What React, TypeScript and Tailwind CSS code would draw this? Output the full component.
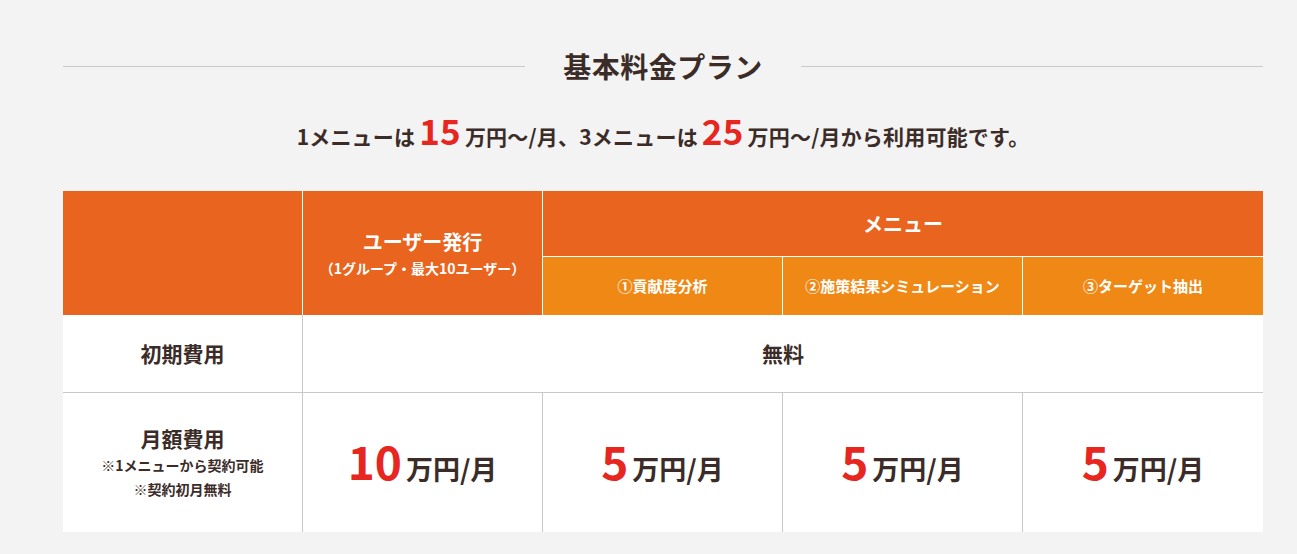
import * as React from "react";

const FONT = { fontFamily: '"Noto Sans CJK JP", "Noto Sans", sans-serif' };

function Price({ num }: { num: string }) {
  return (
    <div className="flex items-baseline justify-center pb-[6px]">
      <span className="text-[46px] font-bold leading-none text-[#e6261f]">{num}</span>
      <span className="ml-[4px] text-[27px] font-bold leading-none text-[#3b2c28]">万円/月</span>
    </div>
  );
}

export default function App() {
  const menus = ["①貢献度分析", "②施策結果シミュレーション", "③ターゲット抽出"];

  return (
    <div className="min-h-[554px] w-full bg-[#f3f3f3] text-[#3b2c28]" style={FONT}>
      <div className="ml-[63px] w-[1200px] pt-[44px]">
        {/* title */}
        <div className="flex items-center">
          <div className="h-px flex-1 bg-[#c9c9c9]" />
          <h2 className="px-[38px] text-[28px] font-bold leading-[44px] tracking-[0.5px]">基本料金プラン</h2>
          <div className="h-px flex-1 bg-[#c9c9c9]" />
        </div>

        <p className="mt-[24px] flex items-baseline justify-center text-[21px] font-bold leading-none tracking-[0.2px]">
          <span>1メニューは</span>
          <span className="mx-[4px] text-[35px] text-[#e6261f]">15</span>
          <span>万円〜/月、3メニューは</span>
          <span className="mx-[4px] text-[35px] text-[#e6261f]">25</span>
          <span>万円〜/月から利用可能です。</span>
        </p>

        {/* table */}
        <div className="mt-[44px] grid grid-cols-[240px_240px_240px_240px_240px] grid-rows-[66px_58px_78px_139px]">
          <div className="row-span-2 border-r border-white bg-[#e9641e]" />
          <div className="row-span-2 flex flex-col items-center justify-center border-r border-white bg-[#e9641e] text-white">
            <span className="text-[20px] font-bold leading-[30px]">ユーザー発行</span>
            <span className="text-[14px] font-bold leading-[22px]">（1グループ・最大10ユーザー）</span>
          </div>
          <div className="col-span-3 flex items-center justify-center border-b border-white bg-[#e9641e] text-[20px] font-bold text-white">
            メニュー
          </div>
          {menus.map((m, i) => (
            <div
              key={m}
              className={`flex items-center justify-center bg-[#f08815] text-[15px] font-bold text-white ${i < 2 ? "border-r border-white" : ""}`}
            >
              {m}
            </div>
          ))}

          <div className="flex items-center justify-center border-b border-r border-[#c8c8c8] bg-white text-[21px] font-bold">
            初期費用
          </div>
          <div className="col-span-4 flex items-center justify-center border-b border-[#c8c8c8] bg-white text-[21px] font-bold">
            無料
          </div>

          <div className="flex flex-col items-center justify-center border-r border-[#c8c8c8] bg-white pb-[2px]">
            <span className="text-[21px] font-bold leading-[30px]">月額費用</span>
            <span className="text-[14px] font-bold leading-[24px]">※1メニューから契約可能</span>
            <span className="text-[14px] font-bold leading-[24px]">※契約初月無料</span>
          </div>
          <div className="flex items-center justify-center border-r border-[#c8c8c8] bg-white">
            <Price num="10" />
          </div>
          <div className="flex items-center justify-center border-r border-[#c8c8c8] bg-white">
            <Price num="5" />
          </div>
          <div className="flex items-center justify-center border-r border-[#c8c8c8] bg-white">
            <Price num="5" />
          </div>
          <div className="flex items-center justify-center bg-white">
            <Price num="5" />
          </div>
        </div>
      </div>
    </div>
  );
}
